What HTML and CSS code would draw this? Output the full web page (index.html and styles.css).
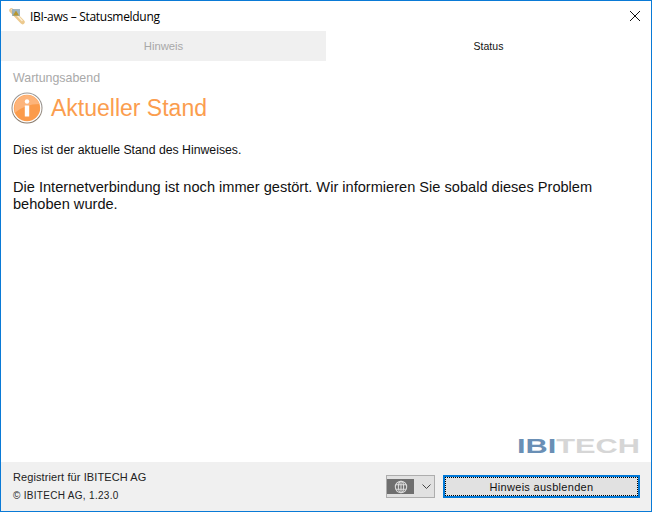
FILE: index.html
```html
<!DOCTYPE html>
<html lang="de">
<head>
<meta charset="utf-8">
<title>IBI-aws – Statusmeldung</title>
<link rel="stylesheet" href="styles.css">
</head>
<body>
<div class="window">
  <header class="titlebar">
    <svg class="app-icon" width="16" height="18" viewBox="0 0 16 18">
      <path d="M2.5 3.5 L13.5 15" stroke="#ecc98e" stroke-width="4.5" stroke-linecap="round"/>
      <path d="M3 2.5 L13 13.5" stroke="#fbeed6" stroke-width="1.5" stroke-linecap="round"/>
      <rect x="3" y="2" width="8" height="7" fill="#8fa9b8" opacity=".85"/>
      <path d="M4 8.5 L7 3.5 L10 8.5 Z" fill="#b8962a"/>
    </svg>
    <span class="title">IBI-aws – Statusmeldung</span>
    <svg class="close" width="10" height="10" viewBox="0 0 10 10"><path d="M0 0 L10 10 M10 0 L0 10" stroke="#111" stroke-width="1"/></svg>
  </header>
  <nav class="tabs">
    <div class="tab tab-inactive">Hinweis</div>
    <div class="tab tab-active">Status</div>
  </nav>
  <main class="content">
    <div class="category">Wartungsabend</div>
    <div class="heading-row">
      <svg class="info-icon" width="32" height="32" viewBox="0 0 32 32">
        <defs>
          <linearGradient id="ring" x1="0" y1="0" x2="0" y2="1"><stop offset="0" stop-color="#9a9a9a"/><stop offset="1" stop-color="#8a7a6a"/></linearGradient>
        </defs>
        <circle cx="16" cy="16" r="15.5" fill="url(#ring)"/>
        <circle cx="16" cy="16" r="14.5" fill="#fff"/>
        <circle cx="16" cy="16" r="13.2" fill="#fb9b4b"/>
        <path d="M3.5 15 A12.8 12.8 0 0 1 28.5 12 Q14 12 3.5 21 Z" fill="#fdb47a"/>
        <circle cx="16" cy="9.5" r="2.2" fill="#fff"/>
        <path d="M13.8 13.5 H18.2 V24.5 H13.8 Z" fill="#fff"/>
      </svg>
      <h1 class="heading">Aktueller Stand</h1>
    </div>
    <p class="lead">Dies ist der aktuelle Stand des Hinweises.</p>
    <p class="message">Die Internetverbindung ist noch immer gestört. Wir informieren Sie sobald dieses Problem behoben wurde.</p>
    <div class="logo-row">
      <svg class="logo" width="124" height="26" viewBox="0 0 124 26">
        <text x="0" y="20.5" class="logo-text" textLength="123" lengthAdjust="spacingAndGlyphs"><tspan class="logo-blue">IBI</tspan><tspan class="logo-grey">TECH</tspan></text>
      </svg>
    </div>
  </main>
  <footer class="footer">
    <div class="legal">
      <div class="registered">Registriert für IBITECH AG</div>
      <div class="copyright">© IBITECH AG, 1.23.0</div>
    </div>
    <div class="actions">
      <div class="lang-select">
        <span class="flag">
          <svg width="14" height="14" viewBox="0 0 16 16" fill="none" stroke="#dcdcdc" stroke-width="1.2"><circle cx="8" cy="8" r="6.5"/><ellipse cx="8" cy="8" rx="3" ry="6.5"/><path d="M2 5.5 H14 M2 10.5 H14 M8 1.5 V14.5"/></svg>
        </span>
        <svg class="chevron" width="9" height="5" viewBox="0 0 9 5" fill="none" stroke="#444" stroke-width="1"><path d="M0.5 0.5 L4.5 4.5 L8.5 0.5"/></svg>
      </div>
      <button class="hide-btn" type="button"><span class="hide-label">Hinweis ausblenden</span></button>
    </div>
  </footer>
</div>
</body>
</html>
```
FILE: styles.css
```css
* { box-sizing: border-box; }
html, body { margin: 0; padding: 0; }
body { width: 652px; height: 512px; overflow: hidden; background: #fff; font-family: "Liberation Sans", Arial, sans-serif; color: #000; }
.window { width: 652px; height: 512px; border: 1px solid #0a7ad6; display: flex; flex-direction: column; background: #fff; }
.titlebar { height: 30px; display: flex; align-items: center; padding: 0 11px 0 8px; flex: none; }
.app-icon { flex: none; }
.title { font-family: "Open Sans", sans-serif; font-size: 12px; margin-left: 5px; flex: 1; letter-spacing: -0.3px; }
.close { flex: none; }
.tabs { display: flex; height: 30px; flex: none; }
.tab { width: 325px; display: flex; align-items: center; justify-content: center; font-size: 10.5px; }
.tab-inactive { background: #f0f0f0; color: #a8a8a8; font-size: 11.3px; }
.tab-active { background: #fff; color: #111; }
.content { flex: 1; min-height: 0; display: flex; flex-direction: column; padding: 10px 12px 0 12px; }
.category { font-size: 12.4px; line-height: 14px; color: #a9a9a9; }
.heading-row { display: flex; align-items: center; margin: 7px 0 0 -2px; height: 32px; gap: 8px; }
.info-icon { flex: none; }
.heading { margin: 0; font-size: 23px; font-weight: 400; color: #fb9d4e; line-height: 32px; }
.lead { margin: 19px 0 0 0; font-size: 12.27px; line-height: 14px; color: #111; }
.message { margin: 22px 0 0 0; font-size: 14.6px; line-height: 17px; width: 600px; color: #111; }
.logo-row { margin-top: auto; display: flex; justify-content: flex-end; padding: 0 0 4px 0; margin-right: -2px; }
.logo { overflow: visible; }
.logo-text { font-family: "Liberation Sans", sans-serif; font-weight: 700; font-size: 21px; }
.logo-blue { fill: #6a8fb5; }
.logo-grey { fill: #d6d6d6; }
.footer { height: 49px; flex: none; background: #f0f0f0; display: flex; justify-content: space-between; padding: 0 11px 0 12px; }
.legal { padding-top: 8px; }
.registered { font-size: 11px; line-height: 14px; letter-spacing: 0.1px; color: #222; }
.copyright { font-size: 10px; line-height: 12px; margin-top: 6px; letter-spacing: 0.3px; color: #222; }
.actions { display: flex; align-items: flex-start; padding-top: 13px; gap: 8px; }
.lang-select { width: 49px; height: 23px; border: 1px solid #adadad; background: #e1e1e1; display: flex; align-items: center; padding-left: 0; gap: 8px; }
.flag { width: 27px; height: 15px; background: #6f6f6f; display: flex; align-items: center; justify-content: center; }
.hide-btn { width: 197px; height: 23px; border: 2px solid #0078d7; background: #e1e1e1; padding: 0; font-family: "Liberation Sans", sans-serif; font-size: 11px; color: #111; outline: 1px dotted #000; outline-offset: -3px; letter-spacing: 0.3px; }
.hide-label { display: block; }
```
